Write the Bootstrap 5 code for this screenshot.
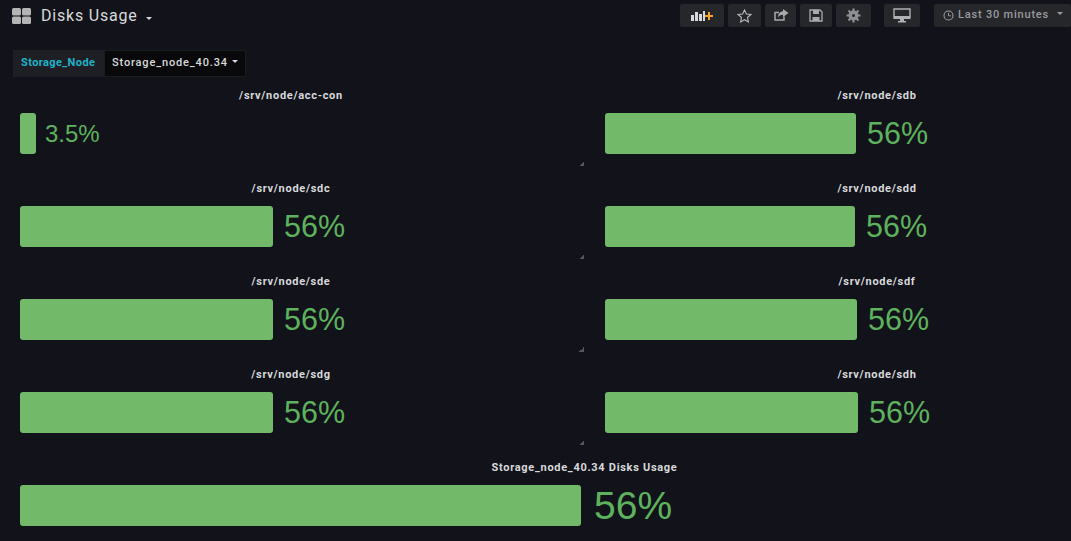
<!DOCTYPE html>
<html lang="en">
<head>
    <meta charset="UTF-8">
    <meta name="viewport" content="width=device-width, initial-scale=1.0">
    <title>Disks Usage</title>
    <link rel="stylesheet" href="https://cdn.jsdelivr.net/npm/bootstrap@5.3.3/dist/css/bootstrap.min.css">
    <style>
        html, body { height: 541px; overflow: hidden; }
        body { background: #11121a; font-family: Roboto, "Liberation Sans", sans-serif; color: #d8d9da; }
        .top-bar { height: 32px; padding: 4px 0 0 12px; }
        .dash-head { margin-top: 4px; }
        .dash-icon { width: 19px; height: 16px; margin-right: 10px; }
        .dash-title { font-size: 16px; line-height: 16px; color: #d8d9da; letter-spacing: .8px; }
        .caret-down { width: 0; height: 0; border-left: 3.5px solid transparent; border-right: 3.5px solid transparent; border-top: 3.5px solid currentColor; display: inline-block; }
        .tool-btn { height: 23px; background: #26272b; border-radius: 2px; color: #b0b1b3; }
        .tool-btn svg { display: block; }
        .time-btn { font-size: 11px; font-weight: 500; letter-spacing: .8px; color: #9a9b9e; width: 137px; padding-left: 9px; }
        .var-row { margin: 18px 0 0 13px; height: 27px; width: 233px; font-size: 11px; font-weight: 700; }
        .var-label { width: 91px; background: #1e1f24; color: #1fb2c9; padding-left: 8px; letter-spacing: .4px; }
        .var-value { flex: 1; background: #09090b; color: #d8d9da; padding-left: 7px; font-weight: 500; letter-spacing: .85px; border: 1px solid #1b1c20; }
        .panel-grid { display: grid; grid-template-columns: 585px 486px; margin-top: 5px; }
        .disk-panel { position: relative; height: 93px; padding: 8px 0 0 20px; width: 562px; }
        .disk-panel.second { width: 486px; }
        .disk-title { font-size: 11px; font-weight: 700; line-height: 12px; text-align: center; color: #d8d9da; letter-spacing: .7px; margin-bottom: 11px; }
        .second .disk-title, .total-panel .disk-title { padding-left: 78px; }
        .disk-bar { height: 41px; background: #73b96a; border-radius: 3px; flex: none; }
        .disk-val { font-family: "Liberation Sans", sans-serif; color: #5eb25d; font-size: 30.5px; line-height: 41px; margin-left: 11px; }
        .disk-val.sm { font-size: 24px; margin-left: 9px; }
        .disk-val.lg { font-size: 39px; margin-left: 13px; }
        .resize-mark { position: absolute; right: -22px; bottom: 9px; width: 5px; height: 5px; background: linear-gradient(135deg, transparent 50%, #55565a 50%); }
        .total-panel { padding: 8px 0 0 20px; }
    </style>
</head>
<body>
    <div class="top-bar d-flex justify-content-between">
        <div class="d-flex align-items-center align-self-start dash-head">
            <svg class="dash-icon" viewBox="0 0 19 16"><g fill="#b4b4b4"><rect x="0" y="0" width="9" height="7.5" rx="1.5"/><rect x="10" y="0" width="9" height="7.5" rx="1.5"/><rect x="0" y="8.5" width="9" height="7.5" rx="1.5"/><rect x="10" y="8.5" width="9" height="7.5" rx="1.5"/></g></svg>
            <span class="dash-title">Disks Usage</span>
            <span class="caret-down ms-2 mt-1"></span>
        </div>
        <div class="d-flex align-items-start">
            <div class="tool-btn d-flex align-items-center justify-content-center" style="width:44px">
                <svg width="26" height="13" viewBox="0 0 26 13"><g fill="#d8d9da"><rect x="2" y="6" width="3" height="6"/><rect x="6" y="3" width="3" height="9"/><rect x="10" y="5" width="3" height="7"/><rect x="14" y="2" width="2" height="10"/></g><path d="M19 3h2v3h3v2h-3v3h-2V8h-3V6h3z" fill="#f4a52a"/></svg>
            </div>
            <div class="tool-btn d-flex align-items-center justify-content-center ms-1" style="width:33px">
                <svg width="15" height="14" viewBox="0 0 15 14"><path d="M7.5 1l1.9 4 4.4.5-3.3 3 .9 4.4-3.9-2.2-3.9 2.2.9-4.4-3.3-3 4.4-.5z" fill="none" stroke="#b8b9bb" stroke-width="1.1"/></svg>
            </div>
            <div class="tool-btn d-flex align-items-center justify-content-center ms-1" style="width:31px">
                <svg width="16" height="13" viewBox="0 0 16 13"><path d="M11 7.5V11H2V3.500h4" fill="none" stroke="#a8a9ab" stroke-width="1.5"/><path d="M10 0l5.500 4L10 8V5.800C7.500 5.800 6 6.600 5 8.500 5 5 7 2.600 10 2.300z" fill="#a8a9ab"/></svg>
            </div>
            <div class="tool-btn d-flex align-items-center justify-content-center ms-1" style="width:32px">
                <svg width="14" height="13" viewBox="0 0 14 13"><path d="M1 1h10l2 2v9H1z" fill="none" stroke="#a8a9ab" stroke-width="1.3"/><rect x="4" y="1" width="6" height="4" fill="#a8a9ab"/><rect x="3.500" y="8" width="7" height="4" fill="#a8a9ab"/></svg>
            </div>
            <div class="tool-btn d-flex align-items-center justify-content-center ms-1" style="width:35px">
                <svg width="15" height="15" viewBox="0 0 15 15"><circle cx="7.500" cy="7.500" r="3.500" fill="none" stroke="#8e8f91" stroke-width="3"/><path d="M7.500 0.500v14M0.500 7.500h14M2.500 2.500l10 10M12.500 2.500l-10 10" stroke="#8e8f91" stroke-width="2.200"/><circle cx="7.500" cy="7.500" r="1.500" fill="#26272b"/></svg>
            </div>
            <div class="tool-btn d-flex align-items-center justify-content-center" style="width:36px;margin-left:13px">
                <svg width="18" height="15" viewBox="0 0 18 15"><path d="M1 1h16v9H1z" fill="none" stroke="#b0b1b3" stroke-width="1.400"/><rect x="1" y="8" width="16" height="3" fill="#b0b1b3"/><rect x="7" y="11" width="4" height="2" fill="#b0b1b3"/><rect x="5" y="13" width="8" height="1.500" fill="#b0b1b3"/></svg>
            </div>
            <div class="tool-btn time-btn d-flex align-items-center" style="margin-left:14px">
                <svg class="me-1" width="11" height="11" viewBox="0 0 11 11"><circle cx="5.500" cy="5.500" r="4.500" fill="none" stroke="#9a9b9e" stroke-width="1.100"/><path d="M5.500 2.800v3h2.400" fill="none" stroke="#9a9b9e"/></svg>
                <span>Last 30 minutes</span>
                <span class="caret-down ms-2 mb-1"></span>
            </div>
        </div>
    </div>

    <div class="var-row d-flex align-items-stretch">
        <div class="var-label d-flex align-items-center">Storage_Node</div>
        <div class="var-value d-flex align-items-center">Storage_node_40.34<span class="caret-down ms-1 mb-1"></span></div>
    </div>

    <div class="panel-grid" id="grid"></div>
    <div class="total-panel">
        <div class="disk-title">Storage_node_40.34 Disks Usage</div>
        <div class="d-flex">
            <div class="disk-bar" style="width:561px"></div>
            <div class="disk-val lg">56%</div>
        </div>
    </div>

    <script>
        // left and right panels, bar widths read off the picture
        const disks = [
            { name: '/srv/node/acc-con', w: 16, val: '3.5%', cls: 'sm' },
            { name: '/srv/node/sdb', w: 251, val: '56%' },
            { name: '/srv/node/sdc', w: 253, val: '56%' },
            { name: '/srv/node/sdd', w: 250, val: '56%' },
            { name: '/srv/node/sde', w: 253, val: '56%' },
            { name: '/srv/node/sdf', w: 252, val: '56%' },
            { name: '/srv/node/sdg', w: 253, val: '56%' },
            { name: '/srv/node/sdh', w: 253, val: '56%' }
        ];
        document.getElementById('grid').innerHTML = disks.map((d, i) => `
            <div class="disk-panel ${i % 2 ? 'second' : ''}">
                <div class="disk-title">${d.name}</div>
                <div class="d-flex">
                    <div class="disk-bar" style="width:${d.w}px"></div>
                    <div class="disk-val ${d.cls || ''}">${d.val}</div>
                </div>
                ${i % 2 ? '' : '<span class="resize-mark"></span>'}
            </div>
        `).join('');
    </script>
    <script src="https://cdn.jsdelivr.net/npm/bootstrap@5.3.3/dist/js/bootstrap.bundle.min.js"></script>
</body>
</html>
